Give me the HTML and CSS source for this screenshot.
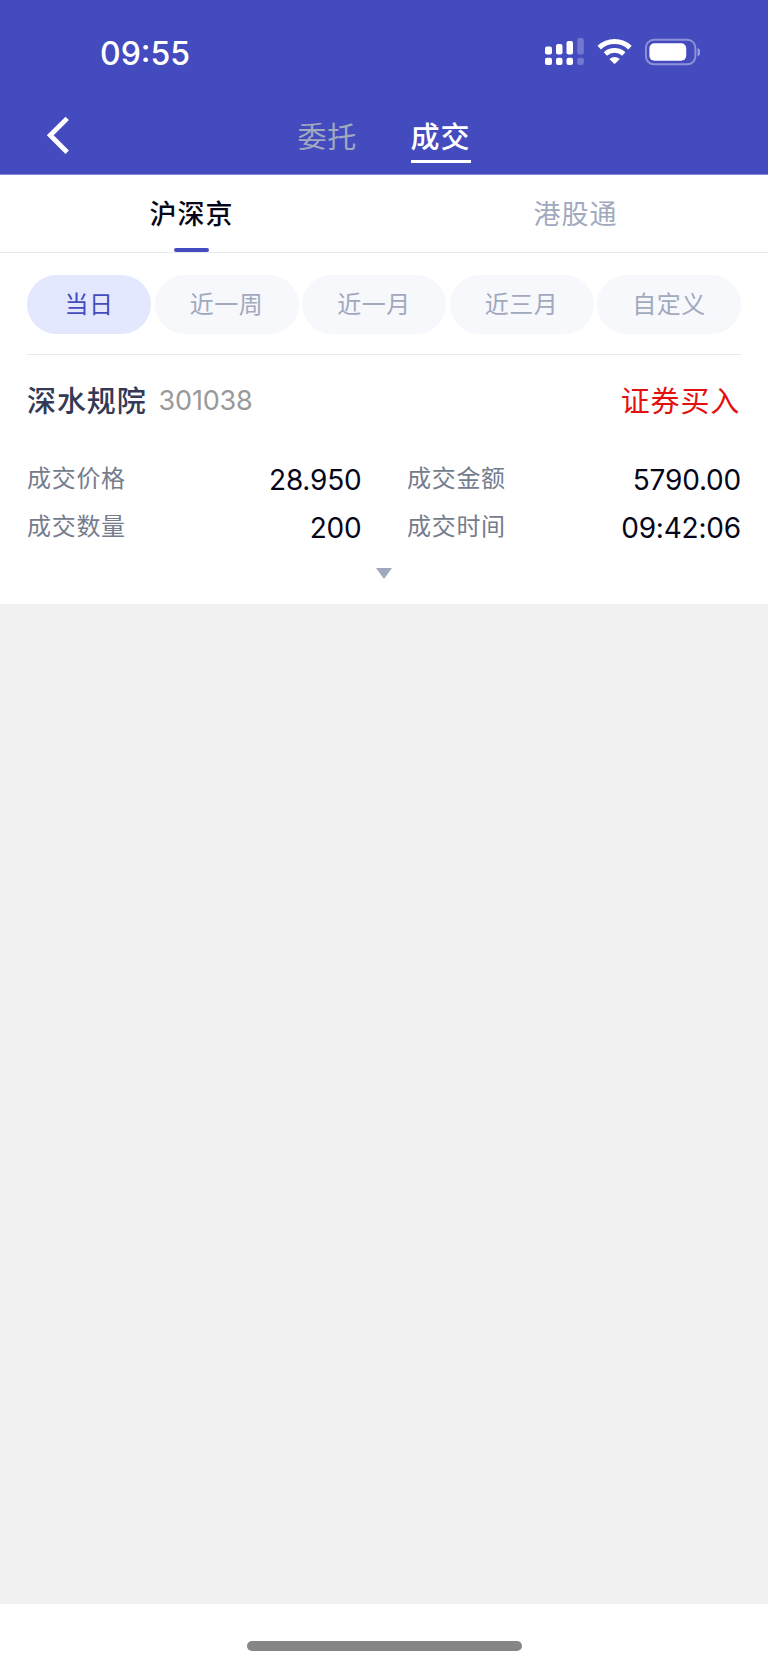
FILE: index.html
```html
<!DOCTYPE html>
<html lang="zh-CN">
<head>
    <meta charset="UTF-8">
    <meta name="viewport" content="width=device-width, initial-scale=1.0">
    <title>成交</title>
    <link rel="stylesheet" href="styles.css">
</head>
<body>
    <header class="header">
        <div class="status-bar">
            <span class="time">09:55</span>
            <svg class="status-icons" width="160" height="36" viewBox="0 0 160 36">
                <g fill="#fff">
                    <rect x="5" y="12.5" width="7" height="8" rx="2"/>
                    <rect x="16" y="10" width="6.5" height="10.5" rx="2"/>
                    <rect x="26.5" y="7" width="6.5" height="13.5" rx="2"/>
                    <rect x="5" y="23.8" width="7" height="7.2" rx="2"/>
                    <rect x="16" y="23.8" width="6.5" height="7.2" rx="2"/>
                    <rect x="26.5" y="23.8" width="6.5" height="7.2" rx="2"/>
                </g>
                <g fill="#fff" fill-opacity=".25">
                    <rect x="37.3" y="4" width="6.5" height="16.5" rx="2"/>
                    <rect x="37.3" y="23.8" width="6.5" height="7.2" rx="2"/>
                </g>
                <path d="M59.2 13.6A22.3 22.3 0 0 1 90 13.6" fill="none" stroke="#fff" stroke-width="5"/>
                <path d="M65.4 20A13.6 13.6 0 0 1 83.8 20" fill="none" stroke="#fff" stroke-width="4.8"/>
                <path d="M69.4 25Q74.6 20.8 79.8 25L75.3 29.5Q74.6 30.2 73.9 29.5Z" fill="#fff"/>
                <rect x="105.9" y="5.8" width="49.5" height="24.5" rx="8" fill="none" stroke="#fff" stroke-opacity=".4" stroke-width="1.9"/>
                <rect x="109.4" y="9.2" width="36.8" height="17.6" rx="5" fill="#fff"/>
                <path d="M157.5 14C161.5 15.2 161.5 21 157.5 22.2Z" fill="#fff" fill-opacity=".45"/>
            </svg>
        </div>
        <nav class="nav">
            <svg class="back" width="26" height="40" viewBox="0 0 26 40" fill="none" stroke="#fff" stroke-width="4.8">
                <path d="M22.2 3.4L5.2 20.3L22.2 37.2"/>
            </svg>
            <div class="nav-tabs">
                <span class="nav-tab">委托</span>
                <span class="nav-tab active">成交</span>
            </div>
        </nav>
    </header>

    <div class="market-tabs">
        <div class="market-tab active">沪深京</div>
        <div class="market-tab">港股通</div>
    </div>

    <main class="content">
        <div class="filters">
            <button class="filter active">当日</button>
            <button class="filter">近一周</button>
            <button class="filter">近一月</button>
            <button class="filter">近三月</button>
            <button class="filter">自定义</button>
        </div>
        <section class="record">
            <div class="record-title">
                <span class="stock-name">深水规院</span>
                <span class="stock-code">301038</span>
                <span class="side">证券买入</span>
            </div>
            <dl class="details">
                <div class="detail"><dt>成交价格</dt><dd>28.950</dd></div>
                <div class="detail"><dt>成交金额</dt><dd>5790.00</dd></div>
                <div class="detail"><dt>成交数量</dt><dd>200</dd></div>
                <div class="detail"><dt>成交时间</dt><dd>09:42:06</dd></div>
            </dl>
            <div class="expand"></div>
        </section>
    </main>

    <footer class="footer">
        <div class="home-bar"></div>
    </footer>
</body>
</html>
```
FILE: styles.css
```css
* {
    margin: 0;
    padding: 0;
    box-sizing: border-box;
}
body {
    display: flex;
    flex-direction: column;
    height: 1665px;
    background: #f1f1f1;
    font-family: Inter, "Noto Sans CJK SC", sans-serif;
    white-space: nowrap;
}
.header {
    height: 175px;
    background: #444bbe;
    border-bottom: 1px solid #8388d6;
    color: #fff;
}
.status-bar {
    display: flex;
    justify-content: space-between;
    height: 100px;
    padding: 34px 68px 0 100px;
}
.time {
    font-size: 32px;
    font-weight: 500;
    line-height: 40px;
}
.nav {
    display: flex;
    height: 74px;
    padding-left: 45px;
}
.back {
    margin-top: 15px;
}
.nav-tabs {
    display: flex;
    gap: 53.5px;
    margin-left: 226.5px;
}
.nav-tab {
    height: 63px;
    font-size: 29px;
    letter-spacing: 0.8px;
    line-height: 75px;
    color: #a0a9be;
}
.nav-tab.active {
    width: 60.5px;
    border-bottom: 3px solid #fff;
    color: #fff;
    font-weight: 500;
}
.market-tabs {
    display: flex;
    height: 78px;
    background: #fff;
    border-bottom: 1px solid #e3ebf3;
}
.market-tab {
    display: flex;
    flex: 1;
    flex-direction: column;
    align-items: center;
    padding-right: 1px;
    font-size: 27px;
    letter-spacing: 1px;
    line-height: 80px;
    color: #a0a9be;
}
.market-tab.active {
    color: #060618;
    font-weight: 500;
}
.market-tab.active::after {
    content: "";
    width: 35px;
    height: 5px;
    margin-top: -7px;
    border-radius: 3px;
    background: #444bc0;
}
.content {
    height: 351px;
    padding: 21.5px 27px 0;
    background: #fff;
}
.filters {
    display: flex;
    gap: 3.5px;
    height: 80.5px;
    border-bottom: 1px solid #eaeaea;
}
.filter {
    flex: 1;
    height: 59px;
    border: none;
    border-radius: 30px;
    background: #f7f8fc;
    color: #a0a9be;
    font: 24px/59px Inter, "Noto Sans CJK SC", sans-serif;
    letter-spacing: 0.5px;
}
.filter.active {
    flex: 0 0 124px;
    background: #e4e8ff;
    color: #444bc0;
}
.record-title {
    display: flex;
    align-items: center;
    height: 88px;
}
.stock-name {
    font-size: 29px;
    font-weight: 500;
    letter-spacing: 0.9px;
    color: #343955;
}
.stock-code {
    margin-left: 12px;
    padding-top: 4px;
    font-size: 27px;
    letter-spacing: -0.2px;
    line-height: 32px;
    color: #999;
}
.side {
    margin-left: auto;
    margin-right: 1px;
    font-size: 29px;
    letter-spacing: 0.8px;
    color: #e3100f;
}
.details {
    display: grid;
    grid-template-columns: 334.5px 334px;
    gap: 0 45.5px;
    padding-top: 12px;
}
.detail {
    display: flex;
    justify-content: space-between;
    height: 47.5px;
}
.detail dt {
    color: #757c8c;
    font-size: 24px;
    letter-spacing: 0.7px;
    line-height: 47px;
}
.detail dd {
    color: #060618;
    font-size: 28px;
    letter-spacing: -0.2px;
    line-height: 51px;
}
.expand {
    width: 16px;
    height: 11px;
    margin: 18px auto 0;
    background: #a0a9be;
    clip-path: polygon(0 0, 100% 0, 50% 100%);
}
.footer {
    height: 61.5px;
    margin-top: auto;
    padding-top: 37.5px;
    background: #fff;
}
.home-bar {
    width: 275px;
    height: 9.5px;
    margin: 0 auto;
    border-radius: 5px;
    background: #868686;
}
```
